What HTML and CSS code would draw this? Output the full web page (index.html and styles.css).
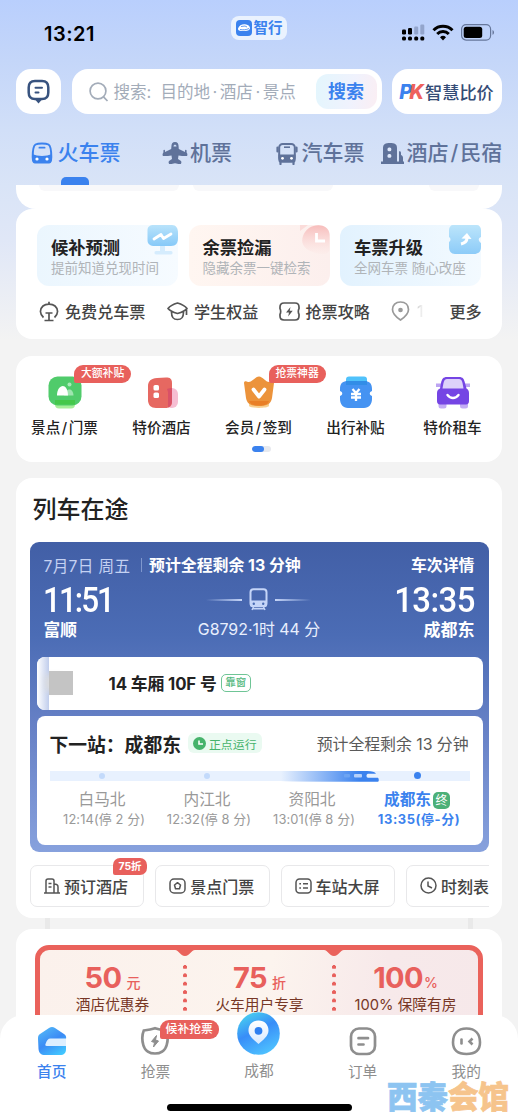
FILE: index.html
```html
<!DOCTYPE html>
<html lang="zh-CN">
<head>
<meta charset="utf-8">
<title>智行</title>
<link rel="stylesheet" href="styles.css">
</head>
<body>
<div class="screen">
  <header class="status">
    <span class="clock">13:21</span>
    <span class="brand">
      <svg width="16" height="16" viewBox="0 0 16 16"><rect width="16" height="16" rx="4" fill="#3b82ee"/><path d="M2 8.500C3 5.500 6 4 9 4.300c3 .2 5 2 5 4 0 1.500-2 2.700-5 2.700H5C3 11 1.700 10 2 8.500z" fill="#fff"/><path d="M5 6.500l4-.5 2 1M4 9.500c3 .5 6 .5 9-1" stroke="#3b82ee" stroke-width=".8" fill="none"/></svg>
      <b>智行</b>
    </span>
    <span class="indicators">
      <svg width="24" height="18" viewBox="0 0 24 18"><g fill="#000"><rect x="1" y="5.500" width="4" height="5" rx="1.200"/><rect x="7" y="4" width="4" height="6.500" rx="1.200"/><rect x="1" y="12.500" width="4" height="4" rx="1.500"/><rect x="7" y="12.500" width="4" height="4" rx="1.500"/><rect x="13.200" y="12.500" width="4" height="4" rx="1.500"/><rect x="19.300" y="12.500" width="4" height="4" rx="1.500"/></g><g fill="#93a5cc"><rect x="13.200" y="2.500" width="4" height="8" rx="1.200"/><rect x="19.300" y="0.500" width="4" height="10" rx="1.200"/></g></svg>
      <svg width="22" height="17" viewBox="0 0 22 17"><g fill="none" stroke="#000" stroke-width="3"><path d="M1.500 6.200a13.500 13.500 0 0 1 19 0"/><path d="M5.200 10a8.200 8.200 0 0 1 11.600 0"/></g><path d="M11 16.500l-3-3.200a4.300 4.300 0 0 1 6 0z"/></svg>
      <svg width="34" height="17" viewBox="0 0 34 17"><rect x=".6" y=".6" width="29" height="15.500" rx="4.500" fill="none" stroke="#66779b" stroke-width="1.200"/><rect x="2.700" y="2.700" width="18.500" height="11.300" rx="2.500"/><path d="M31.500 6c2 .8 2 4 0 4.800z" fill="#66779b"/></svg>
    </span>
  </header>

  <div class="searchrow">
    <div class="msg">
      <svg width="23" height="26" viewBox="0 0 23 26"><path d="M8 2h7c4.500 0 6.300 2 6.300 6.500v5c0 4.500-1.800 6.500-6.300 6.500H8c-4.500 0-6.300-2-6.300-6.500v-5C1.700 4 3.500 2 8 2z" fill="none" stroke="#38537f" stroke-width="2.500"/><path d="M8 20.500l3.500 4 3.500-4z" fill="#38537f"/><path d="M8.500 8.700h6.500M8.500 13.600h3" stroke="#38537f" stroke-width="2" stroke-linecap="round"/></svg>
    </div>
    <div class="search">
      <svg width="20" height="20" viewBox="0 0 20 20" fill="none" stroke="#a3acb9" stroke-width="1.700"><circle cx="9" cy="9" r="7.900"/><path d="M14.500 14.800L18.500 19"/></svg>
      <span class="hint">搜索: 目的地<i>·</i>酒店<i>·</i>景点</span>
      <span class="go">搜索</span>
    </div>
    <div class="pk"><i><em>P</em>K</i><span>智慧比价</span></div>
  </div>

  <nav class="tabs">
    <span class="tab on"><svg width="22" height="23" viewBox="0 0 22 23"><path d="M4.500 2.500C7 1 15 1 17.500 2.500S20.300 11 20.300 15c0 3-1 5-3 5H4.700c-2 0-3-2-3-5 0-4 .3-11 2.800-12.500z" fill="none" stroke="#3b82ee" stroke-width="2"/><path d="M1 12c6 2.500 14 2.500 20 0v5c0 3-1.500 4.500-3 4.500H4C2.500 21.500 1 20 1 17z" fill="#3b82ee"/><rect x="7.500" y="4.800" width="7" height="1.800" rx=".9" fill="#3b82ee"/><circle cx="6" cy="17" r="1.600" fill="#fff"/><circle cx="16" cy="17" r="1.600" fill="#fff"/></svg><span>火车票</span></span>
    <span class="tab"><svg width="26" height="23" viewBox="0 0 26 23" fill="#5f729a"><path d="M13 0c2.700 0 3.600 2 3.600 4.500l.2 2.500 6.200 3v-1.500c0-1 1.600-1 1.600 0v2c.8 1 1.200 2.500.4 3.500-2.500.2-5 0-8.500-.5l-.5 3.500 3 2c.6.800.5 2-.2 3-2.300.300-3.500-.2-5.800-.8-2.300.600-3.500 1.100-5.800.8-.7-1-.8-2.200-.2-3l3-2-.5-3.500C6 14 3.500 14.200 1 14c-.8-1-.4-2.500.4-3.500v-2c0-1 1.600-1 1.600 0V10l6.200-3 .2-2.500C9.400 2 10.300 0 13 0z"/><path d="M11.500 4.500c0-2.500 3-2.500 3 0z" fill="#d0dff9"/></svg><span>机票</span></span>
    <span class="tab"><svg width="22" height="23" viewBox="0 0 22 23"><rect x="3.200" y="2" width="15.600" height="17.500" rx="3.500" fill="none" stroke="#5f729a" stroke-width="2"/><path d="M2.500 12.500h17v6c0 1.500-1 2-2 2h-13c-1 0-2-.5-2-2z" fill="#5f729a"/><path d="M1.500 5.500v4M20.500 5.500v4M4.500 20v2M17.500 20v2" stroke="#5f729a" stroke-width="2.200" stroke-linecap="round"/><path d="M8 5.200h6" stroke="#5f729a" stroke-width="1.600"/><circle cx="6.500" cy="16.300" r="1.400" fill="#fff"/><circle cx="15.500" cy="16.300" r="1.400" fill="#fff"/></svg><span>汽车票</span></span>
    <span class="tab"><svg width="23" height="23" viewBox="0 0 23 23" fill="#5f729a"><path d="M2 20V6c0-4 2.500-5 7-5s7 1 7 5v14z"/><path d="M18 20V9.500c1-.5 2 0 2 1.500v2c1.500.5 2 1.500 2 3v4zM0 19.500h23V22H0z"/><rect x="6.500" y="5.500" width="3.800" height="3.800" rx="1.500" fill="#dfe9fb"/><rect x="6.500" y="12" width="3.800" height="3.800" rx="1.500" fill="#dfe9fb"/></svg><span>酒店<i>/</i>民宿</span></span>
  </nav>
  <div class="tabmark"><i></i></div>

  <main class="content">
    <section class="tail"><i></i><i></i><i></i></section>

    <section class="card tools">
      <div class="promos">
        <div class="promo blue"><b>候补预测</b><span>提前知道兑现时间</span>
          <svg class="deco" width="31" height="31" viewBox="0 0 31 31"><defs><linearGradient id="ga" x2="0" y2="1"><stop stop-color="#b9e3fb"/><stop offset="1" stop-color="#86c9f8"/></linearGradient></defs><path d="M13 20h5v6h6c2 0 2 3.500 0 3.500H9c-2 0-2-3.500 0-3.500h4z" fill="#d5ecfd"/><path d="M7 0h18c4 0 6 3 6 8v5c0 5-2 8-7 8H8c-5 0-7.500-2-7.500-6V5c0-3 2-5 6.500-5z" fill="url(#ga)"/><path d="M7 14l7-4.500 2.500 4L24 9" fill="none" stroke="#fff" stroke-width="2.800" stroke-linecap="round" stroke-linejoin="round"/></svg>
        </div>
        <div class="promo pink"><b>余票捡漏</b><span>隐藏余票一键检索</span>
          <svg class="deco" width="31" height="31" viewBox="0 0 31 31"><defs><linearGradient id="gb" x2="0" y2="1"><stop stop-color="#f7bcbb"/><stop offset="1" stop-color="#fcebe8" stop-opacity=".4"/></linearGradient></defs><path d="M1 0h8L1 6z" fill="#fbdcda"/><path d="M10 3c8-5 20-3 20.500 6v15c0 6-8 6-14 4C7 25 1 20 4 11c1-3 3-6 6-8z" fill="url(#gb)"/><path d="M17.500 8v8H26" fill="none" stroke="#fff" stroke-width="2.800"/></svg>
        </div>
        <div class="promo sky"><b>车票升级</b><span>全网车票 随心改座</span>
          <svg class="deco" width="33" height="31" viewBox="0 0 33 31"><defs><linearGradient id="gc" x2="0" y2="1"><stop stop-color="#bce5fb"/><stop offset="1" stop-color="#8ccbf8"/></linearGradient></defs><path d="M5 0h24c2 0 4 2 4 5v7c-3 1-3 4 0 6v4c0 5-3 7-7 7H7c-4 0-6-3-6-7v-5c2-1 2-4 0-5V5c0-3 2-5 4-5z" fill="url(#gc)"/><path d="M13 19c4-1 6-2.500 6-6" fill="none" stroke="#fff" stroke-width="3"/><path d="M13.500 13.500L19 8l4.500 6z" fill="#fff"/></svg>
        </div>
      </div>
      <div class="links">
        <span class="lk"><svg width="20" height="21" viewBox="0 0 20 21" fill="none" stroke="#555" stroke-width="1.700"><path d="M4.500 16.500C.5 13 .5 8 4 5c3-2.500 9-2.500 12 0 3.500 3 3.500 8-.5 11.500M10 .8v2.400M6.500 12h7M10 12v7M5.500 19.500h9"/></svg>免费兑车票</span>
        <span class="lk"><svg width="21" height="19" viewBox="0 0 21 19" fill="none" stroke="#555" stroke-width="1.700" stroke-linejoin="round"><path d="M1 6.500C3 4 7 2 10.500 1 14 2 18 4 20 6.500 18 9 14 10.500 10.500 11.500 7 10.500 3 9 1 6.500zM4.500 10c0 6 2 7.500 6 7.500s6-1.500 6-7.500M19.500 7.500V13"/></svg>学生权益</span>
        <span class="lk"><svg width="21" height="19" viewBox="0 0 21 19"><path d="M5 1h11c3 0 4 1.500 4 4v1.800c-.9 1-.9 4.400 0 5.400V14c0 2.500-1 4-4 4H5c-3 0-4-1.500-4-4v-1.800c.9-1 .9-4.400 0-5.400V5c0-2.500 1-4 4-4z" fill="none" stroke="#555" stroke-width="1.700"/><path d="M11.500 5L7 10.500h3l-.8 4 4.500-5.800h-3z" fill="#555"/></svg>抢票攻略</span>
        <span class="lk fade"><svg width="19" height="20" viewBox="0 0 19 20" fill="none" stroke="#9a9a9a" stroke-width="1.700"><path d="M9.500 1c5 0 8 3 8 7.500 0 4.500-3.500 7.500-8 10.500-4.500-3-8-6-8-10.500C1.500 4 4.500 1 9.500 1z"/><circle cx="9.500" cy="9" r="1.500" fill="#9a9a9a"/></svg><span class="one">1</span></span>
        <span class="lk more">更多</span>
      </div>
    </section>

    <section class="card services">
      <div class="grid">
        <div class="svc"><svg width="34" height="33" viewBox="0 0 34 33"><rect x="7" y="22" width="20" height="10.500" rx="4" fill="#a6ef98"/><rect x=".5" y=".5" width="33" height="29" rx="9" fill="#50cb6b"/><path d="M7 24h20v4.500H7z" fill="#45c84a"/><circle cx="21.500" cy="8.500" r="2" fill="#a9eab8"/><path d="M16 19.500c1-7 9-9 9.500 0z" fill="#9fe5b0"/><path d="M9 19.500c0-11 10.500-14 11 0z" fill="#fff"/></svg><span>景点<i>/</i>门票</span><em class="badge">大额补贴</em></div>
        <div class="svc"><svg width="34" height="33" viewBox="0 0 34 33"><rect x="20" y="12" width="13" height="20" rx="6" fill="#f6bdd2"/><path d="M12 2l9-.5c4 0 6 1 6 6V25c0 5-2 7-7 7h-9c-5 0-8-3-8-8V10c0-5 3-7.500 9-8z" fill="#e66861"/><path d="M22 13c2-1 4-1 5-1v13c0 3-1 5-4 6.500V16z" fill="#d95167"/><rect x="8.500" y="9" width="5.500" height="5.500" rx="1.600" fill="#fff"/><rect x="8.500" y="16.500" width="5.500" height="5.500" rx="1.600" fill="#fff"/></svg><span>特价酒店</span></div>
        <div class="svc"><svg width="34" height="33" viewBox="0 0 34 33"><path d="M7 24h20v6c-2 2.500-18 2.500-20 0z" fill="#f8cf8f"/><path d="M2 7c0-2 2-2 4-1 4 1 7-5.500 11-5.500S24 7 28 6c2-1 4-1 4 1l-2 15c-1 6-5 8-13 8s-12-2-13-8z" fill="#ec933b"/><path d="M7 25h20c-2 4-5 4.500-10 4.500S9 29 7 25z" fill="#e97f27"/><path d="M11.500 13.500l5.500 7 5.500-7" fill="none" stroke="#fff" stroke-width="3.800" stroke-linejoin="round" stroke-linecap="round"/></svg><span>会员<i>/</i>签到</span><em class="badge">抢票神器</em></div>
        <div class="svc"><svg width="34" height="33" viewBox="0 0 34 33"><rect x="7" y=".5" width="21" height="11" rx="3" fill="#50c2fb"/><path d="M9 5h16c5 0 8 2 8 8v2c-3 1-3 4 0 5v3c0 5-3 9-8 9H9c-5 0-8-4-8-9v-3c3-1 3-4 0-5v-2c0-6 3-8 8-8z" fill="#4593f2"/><path d="M7 5h21v4H7z" fill="#328de7"/><path d="M13.500 13l3.500 4 3.500-4M12 18h10M12 21.500h10M17 17v8" stroke="#fff" stroke-width="2.300" fill="none"/></svg><span>出行补贴</span></div>
        <div class="svc"><svg width="34" height="33" viewBox="0 0 34 33"><path d="M0 7.500h34v3.500H0z" fill="#bca4f2"/><rect x="2.500" y="24" width="8" height="8.500" rx="2.500" fill="#c4adf5"/><rect x="24" y="24" width="8" height="8.500" rx="2.500" fill="#c4adf5"/><path d="M11 1h12c4 0 5 2 6 6l1.500 5.500C32 13 33 15 33 17v8c0 2-1 3.500-3 3.500H4c-2 0-3-1.500-3-3.500v-8c0-2 1-4 3-4.500L5 7c1-4 2-6 6-6z" fill="#7545e4"/><path d="M11 3h12c2 0 3 2 3.500 4l1 5.500H6.500l1-5.500C8 5 9 3 11 3z" fill="#ddd2fa"/><path d="M11.500 19c3 4 8 4 11 0" stroke="#fff" stroke-width="2.400" fill="none" stroke-linecap="round"/></svg><span>特价租车</span></div>
      </div>
      <div class="pager"><i></i></div>
    </section>

    <section class="card trip">
      <h2>列车在途</h2>
      <div class="journey">
        <div class="jtop"><span class="date">7月7日 周五</span><i class="bar"></i><span class="remain">预计全程剩余 13 分钟</span><span class="detail">车次详情</span></div>
        <div class="jtimes">
          <span class="time t1">11:51</span>
          <span class="mid"><i class="ln l"></i><svg width="19" height="23" viewBox="0 0 19 23"><rect x="1.500" y="1.200" width="16" height="17" rx="3" fill="none" stroke="#c5d5f8" stroke-width="2"/><path d="M1 12.500h17V17c0 1-1 2-2 2H3c-1 0-2-1-2-2z" fill="#c5d5f8"/><path d="M4.500 19L3 22M14.500 19l1.500 3M4 20.800h11" stroke="#c5d5f8" stroke-width="1.500"/><circle cx="4.800" cy="15.700" r="1.200" fill="#486bb2"/><circle cx="14.200" cy="15.700" r="1.200" fill="#486bb2"/></svg><i class="ln r"></i></span>
          <span class="time t2">13:35</span>
        </div>
        <div class="jnames"><b>富顺</b><span class="no">G8792·1时 44 分</span><b>成都东</b></div>
        <div class="seat"><i class="smear"></i><i class="mask"></i><b>14 车厢 10F 号</b><em>靠窗</em></div>
        <div class="next">
          <div class="nhead"><b>下一站：成都东</b><span class="ontime"><svg width="13" height="13" viewBox="0 0 13 13"><circle cx="6.500" cy="6.500" r="6.500" fill="#46b36b"/><path d="M6 3.500V7h4" fill="none" stroke="#fff" stroke-width="1.600"/></svg>正点运行</span><span class="left">预计全程剩余 13 分钟</span></div>
          <div class="track"><span><i></i></span><span><i></i></span><span></span><span><i class="now"></i></span>
            <svg class="loco" width="98" height="11" viewBox="0 0 98 11"><defs><linearGradient id="gt"><stop stop-color="#3b82ee" stop-opacity="0"/><stop offset=".8" stop-color="#3b82ee"/></linearGradient></defs><path d="M0 0h86c5 0 8 1 9 2.700h-8c-2 0-2 4 0 4h10c1 1 1 4 0 4H0z" fill="url(#gt)"/><rect x="73" y="3" width="8" height="3.500" rx="1" fill="#b5d0fa"/><rect x="63" y="3" width="6" height="3.500" rx="1" fill="#6da4f2"/></svg>
          </div>
          <div class="stops">
            <div><span>白马北</span><small>12:14(停 2 分)</small></div>
            <div><span>内江北</span><small>12:32(停 8 分)</small></div>
            <div><span>资阳北</span><small>13:01(停 8 分)</small></div>
            <div class="cur"><span>成都东<em>终</em></span><small>13:35(停-分)</small></div>
          </div>
        </div>
      </div>
      <div class="actions">
        <div class="act"><svg width="16" height="16" viewBox="0 0 16 16" fill="none" stroke="#555" stroke-width="1.500"><path d="M0 15h16M2 15V3c0-1.500.500-2 2-2h4c1.500 0 2 .500 2 2v12M10 6c3 0 4 1 4 3v6M4.500 5.500h3M4.500 9h3"/></svg>预订酒店<em class="badge">75折</em></div>
        <div class="act"><svg width="17" height="16" viewBox="0 0 17 16" fill="none" stroke="#555" stroke-width="1.500"><rect x="1" y="1" width="15" height="14" rx="4"/><path d="M8.500 4.700l3 2.300-1 3.700h-4l-1-3.700z" stroke-linejoin="round"/></svg>景点门票</div>
        <div class="act"><svg width="17" height="16" viewBox="0 0 17 16" fill="none" stroke="#555" stroke-width="1.500"><rect x="1" y="1" width="15" height="14" rx="3.500"/><path d="M4.300 5.800H6M8 5.800h5M4.300 10H6M8 10h5"/></svg>车站大屏</div>
        <div class="act"><svg width="17" height="17" viewBox="0 0 17 17" fill="none" stroke="#555" stroke-width="1.500"><circle cx="8.500" cy="8.500" r="7.500"/><path d="M8 4.500V9l4 2"/></svg>时刻表</div>
      </div>
    </section>

    <div class="hangers"><i></i><i></i></div>

    <section class="card coupons">
      <div class="ticket">
        <div class="cp"><p><b>50</b><small>元</small></p><span>酒店优惠券</span></div>
        <div class="cut"><svg width="20" height="6" viewBox="0 0 20 6"><path d="M0 0h20c-4 0-5 6-10 6S4 0 0 0z" fill="#ea625b"/></svg><i></i></div>
        <div class="cp"><p><b>75</b><small>折</small></p><span>火车用户专享</span></div>
        <div class="cut"><svg width="20" height="6" viewBox="0 0 20 6"><path d="M0 0h20c-4 0-5 6-10 6S4 0 0 0z" fill="#ea625b"/></svg><i></i></div>
        <div class="cp"><p><b>100</b><small class="pct">%</small></p><span>100% 保障有房</span></div>
      </div>
    </section>
  </main>

  <footer class="dock">
    <div class="items">
      <div class="it on"><svg width="30" height="30" viewBox="0 0 30 30"><defs><linearGradient id="gh" x1=".2" x2=".8" y2="1"><stop stop-color="#52b8f8"/><stop offset=".5" stop-color="#3c8bf5"/><stop offset="1" stop-color="#42c8ff"/></linearGradient></defs><path d="M12 2c2-1.500 4-1.500 6 0l9 6c2 1 2.500 3 2 5v10c0 4-2 6-6 6H8c-4 0-6-2-6.500-6L1 13c0-2 0-4 2-5z" fill="url(#gh)"/><path d="M13.500 12.500H29v7.500H10c-2 0-2-1-1.300-2.500 1-3 2.300-5 4.800-5z" fill="#deefff"/></svg><span>首页</span></div>
      <div class="it"><svg width="30" height="30" viewBox="0 0 30 30"><path d="M15 2.300c4 1.500 7 1.800 11.200 2.200 1.700 4 1.900 9.500.5 14.500-1.500 6-6.700 8.500-11.700 8.500s-10.200-2.500-11.700-8.500c-1.400-5-1.200-10.500.5-14.500C8 4.100 11 3.800 15 2.300z" fill="none" stroke="#8e8e8e" stroke-width="2.700"/><path d="M16.500 9.500l-5 6 3 1-1 4.500 5-6-3-1z" fill="#8e8e8e" stroke="#8e8e8e" stroke-linejoin="round"/></svg><span>抢票</span><em class="badge">候补抢票</em></div>
      <div class="it big"><svg width="43" height="43" viewBox="0 0 43 43"><defs><linearGradient id="gp" x1=".2" x2=".7" y2="1"><stop stop-color="#49d3ef"/><stop offset=".45" stop-color="#388df8"/><stop offset="1" stop-color="#4fc4ff"/></linearGradient><linearGradient id="gq" x2="0" y2="1"><stop stop-color="#fff"/><stop offset="1" stop-color="#d6e9ff"/></linearGradient></defs><circle cx="21.500" cy="21.500" r="21.300" fill="url(#gp)"/><path d="M21.500 8.500c6 0 10 4 10 10 0 5.500-5.500 9.500-10 13.500-4.500-4-10-8-10-13.500 0-6 4-10 10-10z" fill="url(#gq)"/><circle cx="21.500" cy="18.800" r="3.900" fill="#2d7ff0"/></svg><span>成都</span></div>
      <div class="it"><svg width="28" height="30" viewBox="0 0 28 30" fill="none" stroke="#8e8e8e" stroke-width="2.700"><rect x="2" y="2.500" width="24" height="25.500" rx="8"/><path d="M9.500 12.200h9.500M9.500 18.500h5" stroke-linecap="round"/></svg><span>订单</span></div>
      <div class="it"><svg width="31" height="30" viewBox="0 0 31 30" fill="none" stroke="#8e8e8e" stroke-width="2.600"><path d="M15.500 2.500c9 0 13.500 5.500 13.500 14 0 7.500-4.500 11.500-13.500 11.500S2 24 2 16.500c0-8.500 4.500-14 13.500-14z"/><path d="M10.500 13.500v4" stroke-linecap="round"/><path d="M21.500 12.500l-3 3 3 3"/></svg><span>我的</span></div>
    </div>
    <i class="homebar"></i>
  </footer>
  <div class="watermark">西秦<span>会馆</span></div>
</div>
</body>
</html>
```
FILE: styles.css
```css
* { box-sizing: border-box; }
body { margin: 0; font-family: Inter, "Noto Sans CJK SC", sans-serif; color: #222; }
i, em { font-style: normal; }
svg { display: block; flex: none; }
h2, p { margin: 0; }
span, b, em, small { white-space: nowrap; }

.screen {
  position: relative; width: 518px; height: 1120px; overflow: hidden;
  display: flex; flex-direction: column;
  background: linear-gradient(#b9cffd 0, #c4d6f9 60px, #d1dff8 130px, #d9e4f7 185px, #e0e7f7 240px, #f3f3f3 340px);
}

.status { height: 69px; flex: none; display: grid; grid-template-columns: 1fr 56px 1fr; padding: 16px 23px 0 44px; }
.clock { font-size: 20px; font-weight: 600; line-height: 36px; color: #000; letter-spacing: .5px; }
.brand { width: 56px; height: 24px; margin-left: -10.500px; border-radius: 8px; background: #eaf2fe; display: flex; align-items: center; justify-content: center; gap: 2px; color: #3b82ee; font-size: 14.500px; line-height: 20px; }
.indicators { display: flex; justify-content: flex-end; gap: 7px; padding-top: 8px; }

.searchrow { height: 45px; flex: none; display: flex; padding: 0 16px; gap: 10.500px; }
.msg { width: 45px; border-radius: 15px; background: #fff; display: flex; align-items: center; justify-content: center; }
.search { width: 310px; border-radius: 16px; background: #fff; display: flex; align-items: center; padding: 0 5px 0 17px; }
.hint { margin-left: 5px; font-size: 16.600px; color: #a3acb9; flex: 1; line-height: 24px; letter-spacing: -.05px; word-spacing: 4.500px; }
.hint i { margin: 0 2.500px; }
.go { width: 61px; height: 35px; border-radius: 12px; background: linear-gradient(100deg, #e3f6fd, #f0f2fd 60%, #fbeef3); color: #3b82ee; font-size: 18px; font-weight: 700; line-height: 35px; text-align: center; }
.pk { width: 110px; border-radius: 16px; background: #fff; display: flex; align-items: center; justify-content: center; gap: 2px; padding-right: 1px; }
.pk i { font: italic 800 20px/24px Inter; color: #ee615c; letter-spacing: -3px; padding-right: 2px; }
.pk em { color: #3b82ee; font-style: italic; }
.pk span { font-size: 17.200px; font-weight: 500; color: #344c76; }

.tabs { height: 63px; flex: none; display: flex; align-items: center; padding: 15px 0 0 31px; }
.tab { display: flex; align-items: center; gap: 5px; font-size: 21px; line-height: 30px; font-weight: 500; color: #5f729a; }
.tab i { margin: 0 2px; }
.tab.on { color: #3b82ee; }
.tab:nth-child(1) { width: 131px; gap: 4.500px; }
.tab:nth-child(2) { width: 113.500px; gap: 2px; }
.tab:nth-child(3) { width: 105px; gap: 4px; }
.tab:nth-child(4) { gap: 3px; }
.tabmark { height: 8px; flex: none; padding-left: 61px; }
.tabmark i { display: block; width: 28px; height: 8px; border-radius: 5px 5px 0 0; background: #3b82ee; }

.content { padding: 0 16px; display: flex; flex-direction: column; }
.tail { height: 24px; background: #fff; border-radius: 0 0 20px 20px; display: flex; padding: 0 23px; gap: 14px; }
.tail i { height: 6px; border-radius: 0 0 7px 7px; background: #f8f8fa; flex: 0 0 140px; }
.tail i:nth-child(3) { flex-basis: 50px; margin-left: 82px; }
.card { background: #fff; border-radius: 16px; flex: none; }

.tools { height: 130px; padding: 16px 20px 0 21px; }
.promos { display: grid; grid-template-columns: repeat(3, 141px); gap: 10.500px; }
.promo { position: relative; height: 61px; border-radius: 12px; padding: 10px 0 0 14px; display: flex; flex-direction: column; }
.promo b { font-size: 17.300px; line-height: 25px; font-weight: 700; }
.promo span { font-size: 13.500px; line-height: 16px; color: #b0b4b8; }
.blue { background: linear-gradient(90deg, #ebf6fe, #f6fbff); }
.pink { background: linear-gradient(90deg, #fff6f1, #fcefed); }
.sky { background: linear-gradient(90deg, #e2f2fe, #f3faff); }
.deco { position: absolute; right: 0; top: 0; }
.links { display: flex; align-items: center; height: 50px; padding-left: 2px; }
.lk { display: flex; align-items: center; font-size: 16.100px; font-weight: 500; color: #444; gap: 6px; }
.lk:nth-child(1) { width: 128px; }
.lk:nth-child(2) { width: 112px; }
.lk:nth-child(3) { width: 112px; gap: 5.500px; }
.lk:nth-child(4) { width: 58.500px; gap: 7px; }
.one { color: transparent; background: linear-gradient(90deg, #ccc, #fff); background-clip: text; -webkit-background-clip: text; }

.services { height: 106px; margin-top: 17px; padding-top: 20px; }
.grid { display: grid; grid-template-columns: repeat(5, 97px); }
.svc { position: relative; display: flex; flex-direction: column; align-items: center; gap: 8px; font-size: 14.600px; line-height: 22px; font-weight: 500; }
.svc span i { margin: 0 1.500px; }
.badge { position: absolute; background: #e8605c; color: #fff; font-size: 10.800px; line-height: 18px; height: 18px; padding: 0 7px; border-radius: 9px 9px 9px 2px; font-weight: 500; }
.svc .badge { left: 58px; top: -11px; }
.svc:nth-child(3) .badge { left: 58.500px; }
.pager { width: 19px; height: 6px; border-radius: 3px; background: #e7e9ee; margin: 7px 0 0 236px; overflow: hidden; }
.pager i { display: block; width: 12px; height: 6px; border-radius: 3px; background: #3b82ee; }

.trip { height: 440px; margin-top: 16px; padding: 0 13px 0 14px; }
.trip h2 { height: 64px; line-height: 64px; padding-left: 2.500px; font-size: 24px; font-weight: 500; }
.journey { height: 309.500px; border-radius: 9px; background: linear-gradient(#425fa6, #4b6cb5 30%, #6781c6 60%, #87a1dd); padding: 10px 6.500px 0; color: #fff; display: flex; flex-direction: column; }
.jtop { display: flex; align-items: center; height: 26px; padding: 0 8px 0 7px; font-size: 15.900px; margin-top: -.5px; }
.date { color: #c4d1f2; width: 97px; font-size: 15.600px; letter-spacing: .35px; }
.bar { width: 1px; height: 14px; background: #7f97cd; margin-right: 7.500px; }
.remain { font-weight: 700; letter-spacing: 0; }
.detail { font-weight: 700; margin-left: auto; }
.jtimes { display: grid; grid-template-columns: 1fr auto 1fr; align-items: center; height: 44px; padding: 0 8px 0 6px; margin-top: -.5px; }
.time { font: 500 35px/44px Roboto, sans-serif; padding-top: 2px; }
.t1 { letter-spacing: -2.200px; transform: scaleX(.9); transform-origin: left; }
.t2 { letter-spacing: -.6px; transform: scaleX(.94); transform-origin: right; justify-self: end; }
.mid { display: flex; align-items: center; gap: 7px; margin-top: -1px; }
.ln { width: 36px; height: 2px; }
.ln.l { background: linear-gradient(90deg, transparent, #c5d5f8); }
.ln.r { background: linear-gradient(90deg, #c5d5f8, transparent); }
.jnames { display: grid; grid-template-columns: 1fr auto 1fr; height: 20px; line-height: 18px; padding: 0 8px 0 7px; font-size: 16.700px; }
.jnames b:last-child { text-align: right; font-size: 17px; }
.no { font-size: 15.900px; color: #e9effd; }
.seat { position: relative; height: 53px; margin-top: 15.500px; border-radius: 8px; background: #fff; color: #222; display: flex; align-items: center; overflow: hidden; flex: none; }
.smear { width: 12px; height: 53px; background: linear-gradient(90deg, #ffffff, #c0cdec); }
.mask { width: 24px; height: 24px; background: #c4c4c4; margin-right: 36px; box-shadow: -8px 0 6px -4px #ddd; }
.seat b { font-size: 16.800px; letter-spacing: -.1px; font-weight: 700; }
.seat em { margin-left: 4px; border: 1px solid #6fc596; border-radius: 5px; color: #55b981; font-size: 10.500px; line-height: 16px; height: 18px; width: 30px; text-align: center; font-weight: 500; }
.next { height: 129px; margin-top: 6.500px; border-radius: 8px; background: #fff; color: #222; padding: 13.500px 13px 0; flex: none; }
.nhead { display: flex; align-items: center; height: 27px; }
.nhead b { font-size: 18.800px; font-weight: 700; }
.ontime { display: flex; align-items: center; gap: 3px; margin-left: 7px; width: 74px; height: 20px; padding-left: 5px; border-radius: 6px; background: #eafaf1; color: #46b36b; font-size: 11.900px; }
.left { margin-left: auto; padding-right: 1px; font-size: 15.900px; color: #5a5a5a; letter-spacing: -.05px; }
.track { position: relative; height: 10.500px; margin-top: 14px; background: #e8f1fe; display: grid; grid-template-columns: repeat(4, 1fr); align-items: center; justify-items: center; }
.track i { display: block; width: 6px; height: 6px; border-radius: 50%; background: #c3dafb; }
.track .now { background: #3b82ee; width: 7px; height: 7px; }
.track span { line-height: 0; z-index: 1; }
.loco { position: absolute; left: 231px; top: 0; }
.stops { display: grid; grid-template-columns: repeat(4, 1fr); margin-top: 9px; color: #999; text-align: center; }
.stops div { display: flex; flex-direction: column; align-items: center; }
.stops span { font-size: 15.700px; line-height: 20px; display: flex; align-items: center; height: 20px; }
.stops small { font-size: 12.900px; line-height: 20px; letter-spacing: .1px; padding-left: 4px; }
.stops .cur { color: #3b82ee; font-weight: 700; }
.stops .cur small { letter-spacing: .6px; }
.cur em { width: 17px; height: 17px; border-radius: 5px; background: #4cb078; color: #fff; font-size: 12px; line-height: 17px; margin-left: 2px; font-weight: 400; }
.actions { display: flex; gap: 11px; height: 42px; margin-top: 13.500px; clip-path: inset(-12px 0 -2px 0); }
.act { position: relative; flex: 0 0 114.300px; height: 42px; border: 1px solid #e8e8ea; border-radius: 7px; display: flex; align-items: center; gap: 4px; padding: 0 0 1px 13px; font-size: 16px; font-weight: 500; color: #444; white-space: nowrap; }
.act .badge { left: 82px; top: -8px; font-size: 10.500px; padding: 0 4px; font-weight: 700; border-radius: 7px 7px 7px 2px; width: 34px; text-align: center; line-height: 17px; height: 17px; }

.hangers { height: 11px; flex: none; display: flex; justify-content: space-between; padding: 0 29px; }
.hangers i { width: 5px; background: #e9e9e9; }

.coupons { height: 190px; padding: 16px 19px 0; }
.ticket { height: 170px; border: 5px solid #ea625b; border-radius: 14px; background: linear-gradient(100deg, #fbf1ec, #fcf4ee 50%, #f7e9ea 75%, #f6e8ea); display: flex; }
.cp { flex: 0 0 141px; display: flex; flex-direction: column; align-items: center; padding-top: 10px; }
.cp:nth-child(1) { padding-left: 4px; }
.cp:nth-child(5) { padding-right: 6px; }
.cp p { height: 35px; display: flex; align-items: baseline; gap: 5px; color: #e8605c; line-height: 35px; }
.cp b { font-size: 29px; letter-spacing: -.6px; }
.cp small { font-size: 14px; font-weight: 500; }
.cp .pct { margin-left: -4px; }
.cp span { font-size: 14.700px; line-height: 20px; color: #773726; }
.cut { width: 8px; display: flex; flex-direction: column; align-items: center; }
.cut i { width: 4px; height: 60px; margin-top: 9px; background: radial-gradient(circle at 2px 2px, #e8605c 1.900px, transparent 2.200px) 0 0 / 4px 8.400px; }

.dock { position: absolute; left: 0; bottom: 0; width: 518px; height: 105px; background: #fff; border-radius: 24px 24px 0 0; display: flex; flex-direction: column; align-items: center; }
.items { display: grid; grid-template-columns: repeat(5, 1fr); width: 518px; height: 89px; padding-top: 11px; }
.it { position: relative; display: flex; flex-direction: column; align-items: center; gap: 6px; font-size: 14.700px; line-height: 20px; color: #8e8e8e; }
.it.on { color: #3b82ee; font-weight: 500; }
.it.big { margin-top: -14px; gap: 6px; }
.it .badge { left: 56px; top: -6px; font-size: 11.800px; height: 19px; line-height: 19px; padding: 0 6px; }
.homebar { width: 185px; height: 7px; border-radius: 4px; background: #000; }
.watermark { position: absolute; left: 387px; top: 1079px; font-size: 30.500px; line-height: 36px; font-weight: 900; color: #8dc4f1; -webkit-text-stroke: .7px currentColor; white-space: nowrap; }
.watermark span { color: #f6c48c; }
```
